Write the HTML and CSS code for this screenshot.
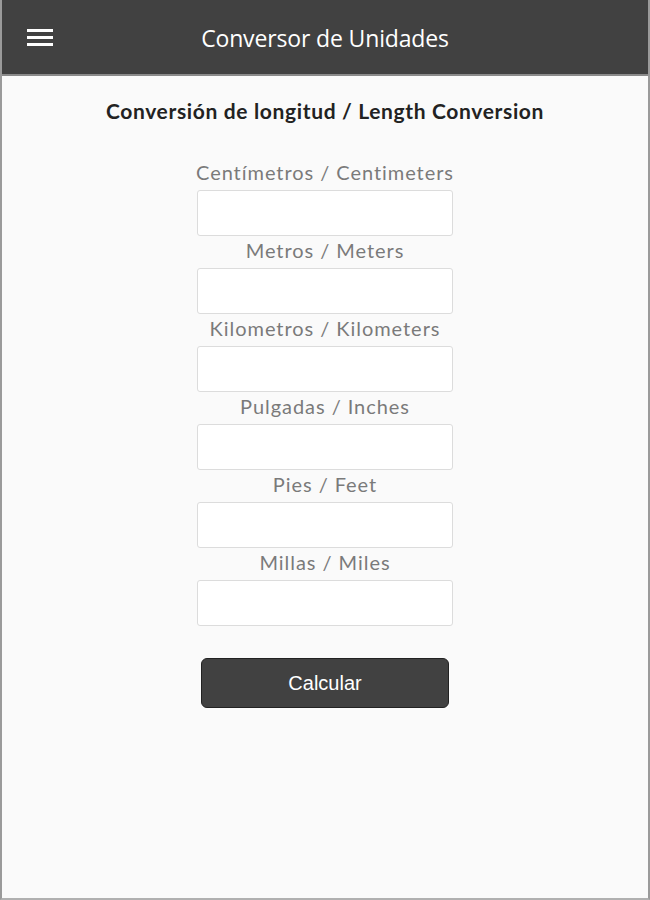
FILE: index.html
```html
<!DOCTYPE html>
<html lang="es">
<head>
<meta charset="utf-8">
<title>Conversor de Unidades</title>
<link rel="stylesheet" href="styles.css">
</head>
<body>
<div class="frame">
  <header class="topbar">
    <button class="menu" aria-label="Menu">
      <svg width="26" height="20" viewBox="0 0 26 20"><rect x="0" y="2" width="26" height="3" fill="#fff"/><rect x="0" y="9" width="26" height="3" fill="#fff"/><rect x="0" y="16" width="26" height="3" fill="#fff"/></svg>
    </button>
    <h1 class="apptitle">Conversor de Unidades</h1>
  </header>
  <main class="content">
    <h2 class="heading">Conversión de longitud / Length Conversion</h2>
    <form class="form">
      <label class="field"><span class="lbl">Centímetros / Centimeters</span><input class="inp" type="text"></label>
      <label class="field"><span class="lbl">Metros / Meters</span><input class="inp" type="text"></label>
      <label class="field"><span class="lbl">Kilometros / Kilometers</span><input class="inp" type="text"></label>
      <label class="field"><span class="lbl">Pulgadas / Inches</span><input class="inp" type="text"></label>
      <label class="field"><span class="lbl">Pies / Feet</span><input class="inp" type="text"></label>
      <label class="field"><span class="lbl">Millas / Miles</span><input class="inp" type="text"></label>
      <button type="button" class="calc">Calcular</button>
    </form>
  </main>
</div>
</body>
</html>
```
FILE: styles.css
```css
html, body {
  margin: 0;
  padding: 0;
  height: 100%;
}
body {
  background: #fafafa;
}
.frame {
  box-sizing: border-box;
  height: 900px;
  border-left: 2px solid #9a9a9a;
  border-right: 2px solid #9a9a9a;
  border-bottom: 2px solid #b0b0b0;
  background: #fafafa;
  display: flex;
  flex-direction: column;
}
.topbar {
  height: 74px;
  background: #414141;
  border-bottom: 2px solid #8a8a8a;
  display: flex;
  align-items: center;
  justify-content: center;
  position: relative;
}
.menu {
  position: absolute;
  left: 25px;
  top: 27px;
  padding: 0;
  border: 0;
  background: none;
  width: 26px;
  height: 20px;
  display: block;
}
.menu svg { display: block; }
.apptitle {
  margin: 0;
  font-family: "Open Sans", "Liberation Sans", sans-serif;
  font-weight: 400;
  font-size: 23px;
  letter-spacing: -0.15px;
  color: #fff;
  padding-top: 2px;
}
.content {
  display: flex;
  flex-direction: column;
  align-items: center;
  padding-top: 18px;
}
.heading {
  margin: 0;
  font-family: "Lato", "Open Sans", sans-serif;
  font-weight: 700;
  font-size: 21px;
  letter-spacing: 0.65px;
  color: #222;
  line-height: 34px;
}
.form {
  margin-top: 30px;
  display: flex;
  flex-direction: column;
  align-items: center;
}
.field {
  display: flex;
  flex-direction: column;
  align-items: center;
}
.lbl {
  font-family: "Lato", "Open Sans", sans-serif;
  font-size: 20px;
  font-weight: 400;
  color: #7a7a7a;
  line-height: 28px;
  padding-bottom: 4px;
  letter-spacing: 0.95px;
}
.inp {
  box-sizing: border-box;
  width: 256px;
  height: 46px;
  margin: 0;
  border: 1px solid #dcdcdc;
  border-radius: 3px;
  background: #fff;
  font-size: 16px;
}
.calc {
  margin-top: 32px;
  width: 248px;
  height: 50px;
  background: #414141;
  border: 1px solid #222;
  border-radius: 6px;
  color: #fff;
  font-family: "Liberation Sans", Arial, sans-serif;
  font-size: 20px;
  letter-spacing: 0;
  cursor: pointer;
}
```
